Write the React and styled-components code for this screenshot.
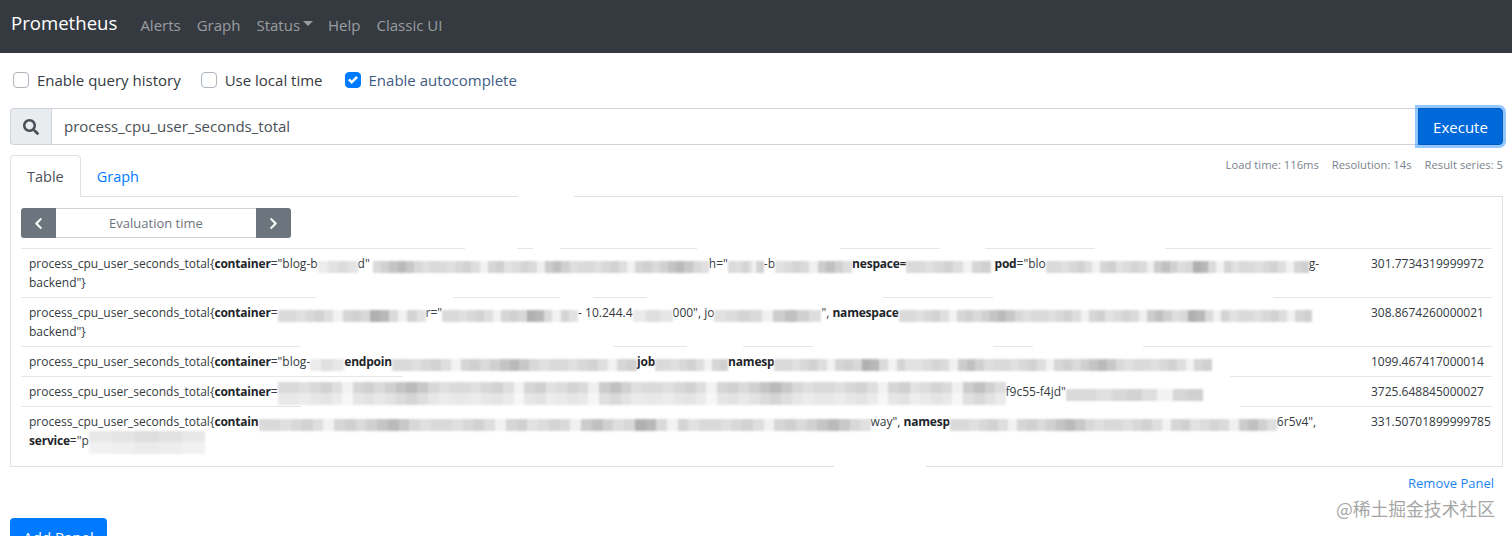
import styled, { createGlobalStyle } from 'styled-components';
import { FaSearch, FaChevronLeft, FaChevronRight } from 'react-icons/fa';

const GlobalStyle = createGlobalStyle`
  html, body {
    margin: 0;
    height: 536px;
    overflow: hidden;
    background: #fff;
    font-family: "Open Sans", "Liberation Sans", sans-serif;
    color: #212529;
  }
  * { box-sizing: border-box; }
`;

// turns a list of grays into the hard stop bands of the pixelated redaction
const mosaic = (cells) => {
  const step = 100 / cells.length;
  const stops = cells.map((c, i) => `rgb(${c},${c},${c}) ${i * step}% ${(i + 1) * step}%`);
  return `linear-gradient(90deg, ${stops.join(', ')})`;
};

// row rule, drawn only over the ranges [from, to] the redaction left visible (px from row left)
const ruleLine = (ranges) => {
  const stops = ranges.map(([a, b]) => `transparent ${a}px, #e4e7ea ${a}px ${b}px, transparent ${b}px`);
  return `linear-gradient(90deg, ${stops.join(', ')})`;
};

const App = () => {
  return (
    <>
      <GlobalStyle />
      <Navbar>
        <Brand>Prometheus</Brand>
        <NavLink>Alerts</NavLink>
        <NavLink>Graph</NavLink>
        <NavLink>Status<Caret /></NavLink>
        <NavLink>Help</NavLink>
        <NavLink>Classic UI</NavLink>
      </Navbar>
      <Main>
        <Options>
          <Option><Check /><span>Enable query history</span></Option>
          <Option><Check /><span>Use local time</span></Option>
          <Option $on>
            <Check $on>
              <svg width="10" height="10" viewBox="0 0 8 8">
                <path fill="#fff" d="M6.564.75l-3.59 3.612-1.538-1.55L0 4.26l2.974 2.99L8 2.193z" />
              </svg>
            </Check>
            <span>Enable autocomplete</span>
          </Option>
        </Options>
        <QueryGroup>
          <SearchAddon><FaSearch size={16} /></SearchAddon>
          <QueryInput>process_cpu_user_seconds_total</QueryInput>
          <ExecuteButton>Execute</ExecuteButton>
        </QueryGroup>
        <TabRow>
          <Tab $active>Table</Tab>
          <Tab>Graph</Tab>
          <Meta>
            <span>Load time: 116ms</span>
            <span>Resolution: 14s</span>
            <span>Result series: 5</span>
          </Meta>
        </TabRow>
        <Panel>
          <BorderGap $top />
          <EvalGroup>
            <EvalButton><FaChevronLeft size={13} /></EvalButton>
            <EvalInput>Evaluation time</EvalInput>
            <EvalButton $right><FaChevronRight size={13} /></EvalButton>
          </EvalGroup>
          <Table>
            {Rows.map((row) => (
              <Row key={row.value} $rule={row.rule}>
                <Series>
                  {row.lines.map((line, i) => <Line key={i}>{line}</Line>)}
                </Series>
                <Value>{row.value}</Value>
              </Row>
            ))}
          </Table>
          <BorderGap />
        </Panel>
        <RemoveRow>Remove Panel</RemoveRow>
        <AddPanel>Add Panel</AddPanel>
      </Main>
      <Watermark>@稀土掘金技术社区</Watermark>
    </>
  );
};

const Navbar = styled.nav`
  height: 53px;
  background: #343a40;
  display: flex;
  align-items: center;
  padding: 0 0 4px 11px;
`;
const Brand = styled.a`
  color: #fff;
  font-size: 18.6px;
  margin-right: 23px;
  margin-top: -5px;
`;
const NavLink = styled.a`
  color: rgba(255, 255, 255, 0.5);
  font-size: 15px;
  margin-right: 16px;
  display: flex;
  align-items: center;
`;
const Caret = styled.i`
  display: inline-block;
  margin-left: 3px;
  margin-right: -1px;
  margin-top: -3px;
  border-top: 5px solid rgba(255, 255, 255, 0.5);
  border-left: 5px solid transparent;
  border-right: 5px solid transparent;
`;
const Main = styled.main`
  padding: 0 9px 0 10px;
`;
const Options = styled.div`
  height: 54px;
  margin-bottom: 1px;
  display: flex;
  align-items: center;
  gap: 20px;
  padding-left: 3px;
`;
const Option = styled.label`
  display: flex;
  align-items: center;
  gap: 8px;
  font-size: 15px;
  margin-left: ${(p) => (p.$on ? 2 : 0)}px;
  color: ${(p) => (p.$on ? '#3f5c85' : '#343a40')};
`;
const Check = styled.span`
  width: 16px;
  height: 16px;
  border-radius: 4px;
  border: 1px solid ${(p) => (p.$on ? '#007bff' : '#adb5bd')};
  background: ${(p) => (p.$on ? '#007bff' : '#fff')};
  display: flex;
  align-items: center;
  justify-content: center;
`;
const QueryGroup = styled.div`
  height: 37px;
  display: flex;
`;
const SearchAddon = styled.div`
  width: 41px;
  background: #e9ecef;
  border: 1px solid #ced4da;
  border-right: 0;
  border-radius: 4px 0 0 4px;
  color: #495057;
  display: flex;
  align-items: center;
  justify-content: center;
`;
const QueryInput = styled.div`
  flex: 1;
  border: 1px solid #ced4da;
  border-right: 0;
  padding: 0 0 2px 12px;
  color: #495057;
  font-size: 15px;
  display: flex;
  align-items: center;
`;
const ExecuteButton = styled.button`
  width: 85px;
  border: 1px solid #005cbf;
  border-radius: 0 4px 4px 0;
  background: #0069d9;
  color: #fff;
  font: inherit;
  font-size: 15px;
  box-shadow: 0 0 0 3px rgba(38, 143, 255, 0.5);
`;
const TabRow = styled.div`
  margin-top: 10px;
  height: 42px;
  display: flex;
  align-items: flex-start;
  position: relative;
`;
const Tab = styled.a`
  height: 42px;
  padding: 0 16px;
  font-size: 14.5px;
  display: flex;
  align-items: center;
  color: ${(p) => (p.$active ? '#495057' : '#007bff')};
  background: ${(p) => (p.$active ? '#fff' : 'transparent')};
  border: 1px solid ${(p) => (p.$active ? '#dee2e6' : 'transparent')};
  border-bottom: 0;
  border-radius: 4px 4px 0 0;
  margin-right: -1px;
  z-index: 1;
`;
const Meta = styled.div`
  margin-left: auto;
  display: flex;
  gap: 13px;
  font-size: 11.25px;
  color: #7b848c;
  line-height: 20px;
`;
const Panel = styled.section`
  position: relative;
  height: 271px;
  margin-top: -1px;
  border: 1px solid #dee2e6;
  padding: 11px 10px;
`;
// the redaction in the picture also wiped short stretches of the panel border
const BorderGap = styled.span`
  position: absolute;
  height: 1px;
  background: #fff;
  left: ${(p) => (p.$top ? 507 : 823)}px;
  width: ${(p) => (p.$top ? 56 : 92)}px;
  ${(p) => (p.$top ? 'top: -1px;' : 'bottom: -1px;')}
`;
const EvalGroup = styled.div`
  width: 270px;
  height: 30px;
  display: flex;
`;
const EvalButton = styled.button`
  width: 35px;
  border: 0;
  background: #6c757d;
  color: #fff;
  padding: 0;
  border-radius: ${(p) => (p.$right ? '0 3px 3px 0' : '3px 0 0 3px')};
  display: flex;
  align-items: center;
  justify-content: center;
`;
const EvalInput = styled.div`
  flex: 1;
  border-top: 1px solid #ced4da;
  border-bottom: 1px solid #ced4da;
  color: #6c757d;
  font-size: 13px;
  display: flex;
  align-items: center;
  justify-content: center;
`;
const Table = styled.div`
  margin-top: 10px;
`;
const Row = styled.div`
  display: flex;
  padding: 6px 8px 5px;
  font-size: 12px;
  line-height: 19px;
  color: #343a40;
  background: ${(p) => ruleLine(p.$rule)} top left / 100% 1px no-repeat;
`;
const Series = styled.div`
  width: 1342px;
  flex: none;
`;
const Line = styled.div`
  white-space: nowrap;
  b { color: #212529; letter-spacing: -0.2px; }
`;
const Value = styled.div`
  white-space: nowrap;
`;
const Smudge = styled.span`
  display: inline-block;
  width: ${(p) => p.$w}px;
  height: ${(p) => p.$h || 12}px;
  margin-bottom: ${(p) => (p.$h ? -9 : -5)}px;
  background: ${(p) => (p.$h ? 'linear-gradient(180deg, transparent 48%, rgba(255,255,255,.4) 48%),' : '')} ${(p) => mosaic(p.$cells)};
  filter: blur(0.8px);
`;
const RemoveRow = styled.a`
  display: block;
  text-align: right;
  color: #1a84f5;
  font-size: 13px;
  line-height: 18px;
  margin-top: 7px;
  padding-right: 9px;
`;
const AddPanel = styled.button`
  display: block;
  margin-top: 26px;
  width: 97px;
  height: 37px;
  border: 0;
  border-radius: 4px;
  background: #007bff;
  color: #fff;
  font: inherit;
  font-size: 15px;
`;
const Watermark = styled.div`
  position: absolute;
  right: 17px;
  top: 496px;
  font-family: "Noto Sans CJK SC", "Open Sans", sans-serif;
  font-size: 17.8px;
  line-height: 24px;
  color: #a6a6a6;
`;

const A = [218, 208, 196, 186, 200, 216, 224];
const B = [226, 220, 212, 218, 240, 204, 192, 208, 222];
const C = [218, 218, 224, 216, 210, 222, 242, 214, 208];
const D = [216, 176, 184, 218, 242, 212, 226];

const Rows = [
  {
    value: '301.7734319999972',
    rule: [[0, 444], [496, 512], [539, 676], [819, 919], [964, 1074], [1144, 1471]],
    lines: [
      <>
        process_cpu_user_seconds_total{'{'}<b>container</b>="blog-b<Smudge $w={40} $cells={[236, 226, 220, 228]} />d"{' '}
        <Smudge $w={336} $cells={[...A, ...C, ...B, ...C, ...A]} />
        h="<Smudge $w={36} $cells={C} />-b<Smudge $w={77} $cells={B} /><b>nespace=</b>
        <Smudge $w={85} $cells={C} />{' '}<b>pod</b>="blo<Smudge $w={263} $cells={[...C, ...B, ...D, ...C]} />g-
      </>,
      <>backend"{'}'}</>,
    ],
  },
  {
    value: '308.8674260000021',
    rule: [[0, 295], [432, 539], [572, 626], [862, 972], [1252, 1471]],
    lines: [
      <>
        process_cpu_user_seconds_total{'{'}<b>container</b>=<Smudge $w={148} $cells={[...C, ...D]} />r="
        <Smudge $w={136} $cells={[...C, ...D]} />- 10.244.4<Smudge $w={40} $cells={[234, 222, 230]} />000",
        {' '}jo<Smudge $w={107} $cells={B} />", <b>namespace</b>
        <Smudge $w={413} $cells={[...C, ...A, ...C, ...B, ...D, ...C]} />
      </>,
      <>backend"{'}'}</>,
    ],
  },
  {
    value: '1099.467417000014',
    rule: [[0, 279], [592, 666], [722, 792], [972, 1012], [1122, 1471]],
    lines: [
      <>
        process_cpu_user_seconds_total{'{'}<b>container</b>="blog-<Smudge $w={34} $cells={[236, 224, 232]} />
        <b>endpoin</b><Smudge $w={245} $cells={[...C, ...A, ...C]} /><b>job</b>
        <Smudge $w={73} $cells={C} /><b>namesp</b><Smudge $w={438} $cells={[...C, ...D, ...B, ...C, ...A, ...C]} />
      </>,
    ],
  },
  {
    value: '3725.648845000027',
    rule: [[0, 382], [1209, 1471]],
    lines: [
      <>
        process_cpu_user_seconds_total{'{'}<b>container</b>=
        <Smudge $w={728} $h={23} $cells={[...C, ...A, ...C, ...B, ...C, ...A, ...C, ...B]} />f9c55-f4jd"
        <Smudge $w={137} $cells={C} />
      </>,
    ],
  },
  {
    value: '331.50701899999785',
    rule: [[0, 280], [1219, 1471]],
    lines: [
      <>
        process_cpu_user_seconds_total{'{'}<b>contain</b>
        <Smudge $w={612} $cells={[...C, ...A, ...C, ...B, ...D, ...C, ...A]} />way", <b>namesp</b>
        <Smudge $w={327} $cells={[...C, ...A, ...C, ...B]} />6r5v4",
      </>,
      <>
        <b>service</b>="p<Smudge $w={116} $h={23} $cells={[232, 228, 222, 226, 232]} />
      </>,
    ],
  },
];

export default App;
